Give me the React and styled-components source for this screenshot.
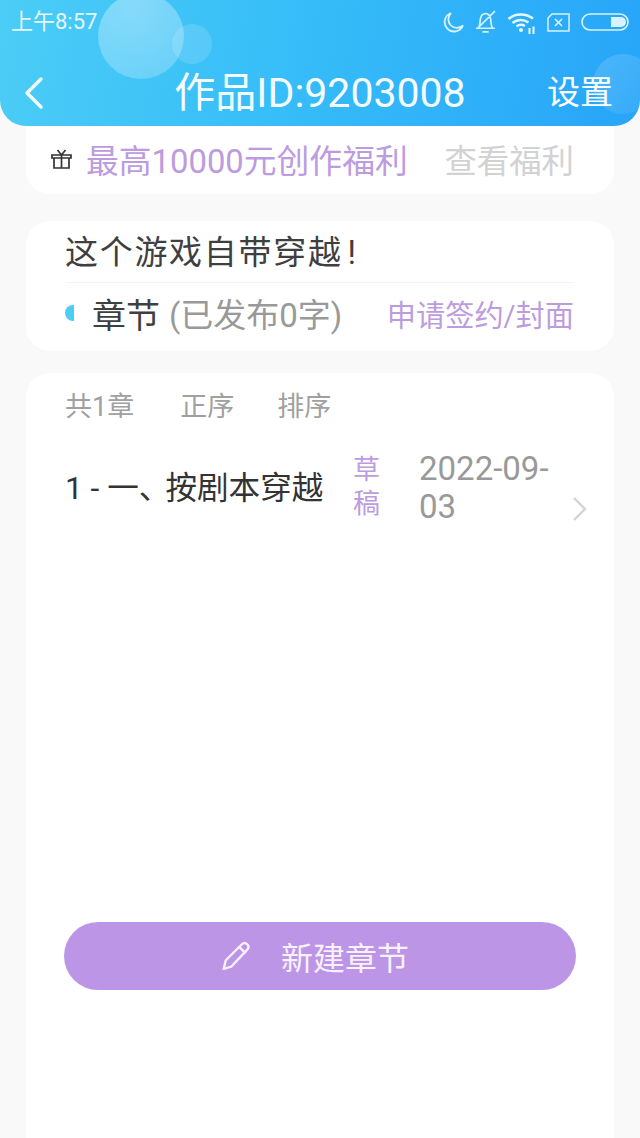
import React from "react";
import styled, { createGlobalStyle } from "styled-components";

const Global = createGlobalStyle`
  html, body { margin: 0; padding: 0; background: #f9f9f9; }
  body { font-family: Roboto, "Noto Sans CJK SC", sans-serif; }
  * { box-sizing: border-box; }
`;
const Page = styled.div`
  width: 640px; height: 1138px; overflow: hidden; background: #f9f9f9;
  display: flex; flex-direction: column;
`;
const Header = styled.header`
  position: relative; height: 126px; flex: none; overflow: hidden; color: #fff;
  border-radius: 0 0 26px 26px;
  background: linear-gradient(100deg, #4bcdf6 0%, #37bdf8 45%, #27a5f9 100%);
`;
const Bubble = styled.div`
  position: absolute;
  left: ${p => p.$x - p.$r}px; top: ${p => p.$y - p.$r}px;
  width: ${p => p.$r * 2}px; height: ${p => p.$r * 2}px; border-radius: 50%;
  background: ${p => p.$bg};
`;
const StatusBar = styled.div`
  position: relative; height: 44px; padding: 0 11px;
  display: flex; align-items: center; justify-content: space-between;
`;
const Clock = styled.span`
  font-size: 22px; line-height: 44px; opacity: .85;
`;
const StatusIcons = styled.div`
  display: flex; align-items: center; gap: 11px;
`;
const NavBar = styled.div`
  position: relative; height: 82px; padding: 16px 28px 0 24px;
  display: grid; grid-template-columns: 1fr auto 1fr; align-items: center;
`;
const Title = styled.h1`
  margin: 0 0 0 4px; font-size: 41px; font-weight: 400; line-height: 46px; opacity: .95;
`;
const NavAction = styled.span`
  font-size: 33px; line-height: 46px; justify-self: end; margin-right: -1px;
`;
const BackIcon = styled.svg`
  width: 22px; height: 34px; display: block;
`;
const Content = styled.main`
  flex: 1; min-height: 0; padding: 0 26px; display: flex; flex-direction: column;
`;
const PromoCard = styled.section`
  height: 68px; background: #fff; border-radius: 0 0 24px 24px; padding: 4px 40px 0 25px;
  display: flex; align-items: center; flex: none;
`;
const GiftIcon = styled.svg`
  flex: none; margin-top: -6px;
`;
const PromoText = styled.span`
  font-size: 32.8px; color: #bd9bdf; margin-left: 14px; line-height: 40px;
`;
const PromoLink = styled.span`
  font-size: 32.4px; color: #d2d2d2; margin-left: auto; line-height: 40px;
`;
const WorkCard = styled.section`
  margin-top: 27px; height: 130px; flex: none; background: #fff; border-radius: 24px;
  padding: 0 40px;
`;
const WorkTitle = styled.div`
  height: 62px; border-bottom: 1px solid #f3f3f3; font-size: 33px; color: #3f3f3f;
  line-height: 64px; letter-spacing: 1.7px; text-indent: -1px;
`;
const Bang = styled.span`
  margin-left: 5px;
`;
const WorkMeta = styled.div`
  height: 60px; display: flex; align-items: center; margin-top: 0;
`;
const HalfDot = styled.i`
  width: 9px; height: 16px; background: #4ccdf3; border-radius: 8px 0 0 8px; flex: none;
  margin: 0 18px 0 -1px;
`;
const SectionName = styled.span`
  font-size: 34px; color: #3f3f3f;
`;
const SectionNote = styled.span`
  font-size: 33px; color: #999; margin-left: 9px;
`;
const SectionLink = styled.span`
  font-size: 29.2px; color: #bd9bdf; margin-left: auto;
`;
const ListCard = styled.section`
  margin-top: 22px; flex: 1; background: #fff; border-radius: 24px 24px 0 0;
  padding: 0 27px 0 40px; display: flex; flex-direction: column;
`;
const ListTools = styled.div`
  height: 62px; display: flex; align-items: center; margin-left: -1px;
  font-size: 27px; color: #a0a0a0;
`;
const ToolItem = styled.span`
  margin-right: ${p => p.$gap}px;
`;
const ChapterRow = styled.div`
  display: flex; align-items: center; height: 98px; margin-top: 3px;
`;
const ChapterName = styled.span`
  font-size: 31.6px; color: #333; width: 287px; flex: none; padding-bottom: 4px; margin-left: -1px; margin-right: 1px;
`;
const Comma = styled.span`
  letter-spacing: -5px;
`;
const ChapterStatus = styled.span`
  width: 28px; font-size: 27px; line-height: 34px; color: #bd9bdf; flex: none;
`;
const ChapterDate = styled.span`
  width: 136px; margin-left: 38px; padding-top: 2px; font-size: 33px; line-height: 38px; color: #999; flex: none;
  overflow-wrap: break-word;
`;
const Chevron = styled.svg`
  width: 16px; height: 26px; margin: 44px 0 0 17px; flex: none;
`;
const NewButton = styled.button`
  margin: 386px 0 0 -2px; width: 512px; height: 68px; flex: none; border: 0; border-radius: 34px;
  background: #bd95e6; color: #f7f1fc; font: inherit; font-size: 32px;
  display: flex; align-items: center; justify-content: center; gap: 30px; padding: 0 10px 0 0;
`;

export default function App() {
  return (
    <Page>
      <Global />
      <Header>
        <Bubble $x={141} $y={36} $r={43} $bg="radial-gradient(circle at 40% 15%, rgba(255,255,255,.36), rgba(255,255,255,.2))" />
        <Bubble $x={192} $y={44} $r={20} $bg="rgba(255,255,255,.14)" />
        <Bubble $x={623} $y={84} $r={30} $bg="linear-gradient(135deg, rgba(255,255,255,.16), rgba(255,255,255,.06))" />
        <StatusBar>
          <Clock>上午8:57</Clock>
          <StatusIcons>
            <svg width="21" height="22" viewBox="0 0 21 22" fill="none" stroke="#d8f3ff" strokeWidth="1.8">
              <path d="M8 2a9.500 9.500 0 1 0 12 12.500a8.500 8.500 0 0 1-12-12.500z" />
            </svg>
            <svg width="21" height="24" viewBox="1 1 20 23" fill="none" stroke="#d8f3ff" strokeWidth="1.6">
              <path d="M2 18.500h18M4 18.500c2-2 1.500-5 2-8.500c.5-3 2.500-5.500 5-5.500s4.500 2.500 5 5.500c.5 3.500 0 6.500 2 8.500M8 22h6M3 19L20 2" />
            </svg>
            <svg width="29" height="24" viewBox="0 0 29 24" fill="none" stroke="#e4f7ff" strokeWidth="2.400">
              <path d="M1.500 9C8 3 19 3 26 8.500M5.500 13c4.500-4 11-4 16-.5M9.500 16.500c2.500-2 6-2 8.500-.5" />
              <circle cx="14" cy="20" r="2" fill="#e4f7ff" stroke="none" />
              <path d="M22.500 18v6M26.500 16.500V24" strokeWidth="2" />
            </svg>
            <svg width="23" height="19" viewBox="0 0 23 19" fill="none" stroke="#d8f3ff" strokeWidth="1.500">
              <path d="M5 1h17v17H1V5z" />
              <path d="M8 6l7 7M15 6l-7 7" strokeWidth="1.700" />
            </svg>
            <svg width="48" height="18" viewBox="0 0 48 18" fill="none">
              <rect x="1" y="1" width="46" height="16" rx="8" stroke="#d8f3ff" strokeWidth="1.600" />
              <path d="M30 4h10a5 5 0 0 1 0 10H30z" fill="#d8f3ff" />
            </svg>
          </StatusIcons>
        </StatusBar>
        <NavBar>
          <BackIcon viewBox="0 0 22 34" fill="none" stroke="#f2fbff" strokeWidth="3.400" strokeLinecap="round" strokeLinejoin="round">
            <path d="M17 3L3 17l14 14" />
          </BackIcon>
          <Title>作品ID:9203008</Title>
          <NavAction>设置</NavAction>
        </NavBar>
      </Header>
      <Content>
        <PromoCard>
          <GiftIcon width="21" height="22" viewBox="0 0 21 22" fill="none" stroke="#333" strokeWidth="1.700">
            <path d="M1 7h19v3H1zM3 10v10h15V10M10.500 7v13M6.500 2l4 5l4-5" />
          </GiftIcon>
          <PromoText>最高10000元创作福利</PromoText>
          <PromoLink>查看福利</PromoLink>
        </PromoCard>
        <WorkCard>
          <WorkTitle>这个游戏自带穿越<Bang>!</Bang></WorkTitle>
          <WorkMeta>
            <HalfDot />
            <SectionName>章节</SectionName>
            <SectionNote>(已发布0字)</SectionNote>
            <SectionLink>申请签约/封面</SectionLink>
          </WorkMeta>
        </WorkCard>
        <ListCard>
          <ListTools>
            <ToolItem $gap={46}>共1章</ToolItem>
            <ToolItem $gap={43}>正序</ToolItem>
            <ToolItem $gap={0}>排序</ToolItem>
          </ListTools>
          <ChapterRow>
            <ChapterName>1 - 一<Comma>、</Comma>按剧本穿越</ChapterName>
            <ChapterStatus>草稿</ChapterStatus>
            <ChapterDate>2022-09-03</ChapterDate>
            <Chevron viewBox="0 0 16 26" fill="none" stroke="#d4d4d4" strokeWidth="2.400">
              <path d="M2 2l11 11L2 24" />
            </Chevron>
          </ChapterRow>
          <NewButton>
            <svg width="30" height="30" viewBox="1 1 27 28" fill="none" stroke="#f7f1fc" strokeWidth="2.200" strokeLinejoin="round">
              <path d="M3 27l2-8L20 4c1.500-1.500 3.500-1.500 5 0s1.500 3.500 0 5L10 25z" />
              <path d="M17.500 6.500l6 6" />
            </svg>
            <span>新建章节</span>
          </NewButton>
        </ListCard>
      </Content>
    </Page>
  );
}
